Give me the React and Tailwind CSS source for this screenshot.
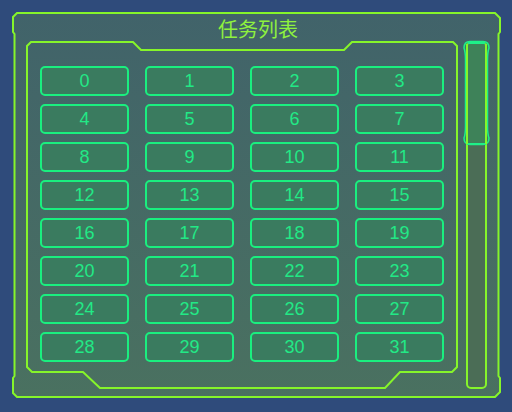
export default function App() {
  const nums = Array.from({ length: 32 }, (_, i) => i);
  return (
    <div className="relative w-[512px] h-[412px] bg-[#2f4b7b] overflow-hidden" style={{ fontFamily: '"Liberation Sans", Arial, sans-serif' }}>
      <svg className="absolute inset-0" width="512" height="412" viewBox="0 0 512 412">
        <defs>
          <linearGradient id="pf" x1="0" y1="0" x2="0" y2="1">
            <stop offset="0" stopColor="#41636a" />
            <stop offset="1" stopColor="#4a7160" />
          </linearGradient>
        </defs>
        <path
          d="M17,13 L495,13 L500,18 L500,32 L498.5,34 L498.5,376 L500,378 L500,392 L495,397 L17,397 L13,393 L13,378 L14.5,376 L14.5,34 L13,32 L13,17 Z"
          fill="url(#pf)"
          stroke="#86f52a"
          strokeWidth="2"
        />
        <path
          d="M31,42 L133,42 L141,50 L344,50 L352,42 L453,42 L457,46 L457,367 L452,372 L400,372 L385,388 L100,388 L83,372 L32,372 L27,367 L27,46 Z"
          fill="none"
          stroke="#86f52a"
          strokeWidth="2"
        />
        <rect x="467" y="42" width="19" height="346" rx="4" fill="#4b6d56" stroke="#86f52a" strokeWidth="2" />
        <path
          d="M470,41.5 L483,41.5 Q489,41.5 489,48 Q487.5,52 487.5,60 L487.5,126 Q487.5,134 489,138 Q489,144.5 483,144.5 L470,144.5 Q464,144.5 464,138 Q465.5,134 465.5,126 L465.5,60 Q465.5,52 464,48 Q464,41.5 470,41.5 Z"
          fill="rgba(40,170,95,0.35)"
          stroke="#1ef088"
          strokeWidth="1.5"
        />
        <line x1="467" y1="144" x2="486" y2="144" stroke="#1ef088" strokeWidth="2" />
        <line x1="468" y1="43" x2="485" y2="43" stroke="#1ef088" strokeWidth="2" />
        <line x1="467" y1="44" x2="467" y2="144" stroke="#86f52a" strokeWidth="2" />
        <line x1="486" y1="44" x2="486" y2="144" stroke="#86f52a" strokeWidth="2" />
      </svg>
      <div className="relative flex flex-col">
        <div
          className="pt-[17px] pl-[4px] text-center text-[20px] leading-[24px] text-[#8ef23e]"
          style={{ fontFamily: '"Noto Sans CJK SC", "Liberation Sans", sans-serif' }}
        >
          任务列表
        </div>
        <div className="mt-[25px] ml-[40px] grid grid-cols-[repeat(4,89px)] gap-x-[16px] gap-y-[8px]">
          {nums.map((n) => (
            <div
              key={n}
              className="h-[30px] rounded-[5px] border-2 border-[#1aef7f] bg-[#3a7b5f] flex items-center justify-center text-[18px] leading-none text-[#22e986]"
            >
              {n}
            </div>
          ))}
        </div>
      </div>
    </div>
  );
}
